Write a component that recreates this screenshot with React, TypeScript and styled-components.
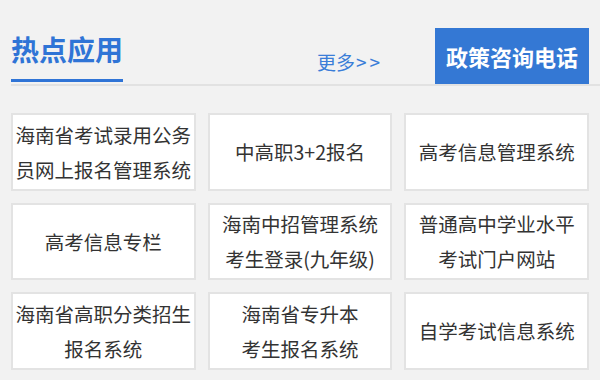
import React from 'react';
import styled, {createGlobalStyle} from 'styled-components';

const GlobalStyle = createGlobalStyle`
  html, body {
    margin: 0;
    padding: 0;
    background: #f2f2f2;
    font-family: "Noto Sans CJK SC", "Noto Sans", sans-serif;
  }
`;

const apps: string[][] = [
  ['海南省考试录用公务', '员网上报名管理系统'],
  ['中高职3+2报名'],
  ['高考信息管理系统'],
  ['高考信息专栏'],
  ['海南中招管理系统', '考生登录(九年级)'],
  ['普通高中学业水平', '考试门户网站'],
  ['海南省高职分类招生', '报名系统'],
  ['海南省专升本', '考生报名系统'],
  ['自学考试信息系统'],
];

const Page = styled.div`
  padding: 28px 0 0 11px;
  width: 600px;
  height: 380px;
  box-sizing: border-box;
  overflow: hidden;
`;

const Header = styled.div`
  display: flex;
  align-items: flex-end;
  border-bottom: 2px solid #e2e2e2;
`;

const TitleBlock = styled.div`
  display: flex;
  flex-direction: column;
  width: 112px;
  padding-bottom: 2px;
`;

const Title = styled.h2`
  margin: 0 0 14px;
  font-size: 28px;
  line-height: 32px;
  font-weight: 700;
  color: #2f74d6;
  white-space: nowrap;
`;

const Underline = styled.div`
  height: 3px;
  background: #2f74d6;
`;

const More = styled.a`
  margin: 0 52px 12px auto;
  font-size: 19px;
  line-height: 20px;
  color: #3a7dd8;
  text-decoration: none;
  white-space: nowrap;
  cursor: pointer;
`;

const Arrows = styled.span`
  margin-left: 1px;
  letter-spacing: 3px;
`;

const PhoneButton = styled.button`
  width: 154px;
  height: 56px;
  margin-right: 11px;
  border: none;
  background: #3478d4;
  color: #fff;
  font-family: inherit;
  font-size: 22px;
  font-weight: 700;
  cursor: pointer;
`;

const Grid = styled.div`
  display: grid;
  grid-template-columns: repeat(3, 1fr);
  grid-auto-rows: 77.5px;
  gap: 12px;
  margin: 27px 11px 0 0;
`;

const Card = styled.a`
  display: flex;
  flex-direction: column;
  align-items: center;
  justify-content: center;
  background: #fff;
  border: 2px solid #e3e3e3;
  font-size: 19.5px;
  line-height: 35px;
  color: #333;
  text-align: center;
  white-space: nowrap;
  cursor: pointer;
`;

export default function App() {
  return (
    <>
      <GlobalStyle />
      <Page>
        <Header>
          <TitleBlock>
            <Title>热点应用</Title>
            <Underline />
          </TitleBlock>
          <More>
            更多<Arrows>&gt;&gt;</Arrows>
          </More>
          <PhoneButton>政策咨询电话</PhoneButton>
        </Header>
        <Grid>
          {apps.map((lines, i) => (
            <Card key={i}>
              {lines.map(line => (
                <span key={line}>{line}</span>
              ))}
            </Card>
          ))}
        </Grid>
      </Page>
    </>
  );
}
